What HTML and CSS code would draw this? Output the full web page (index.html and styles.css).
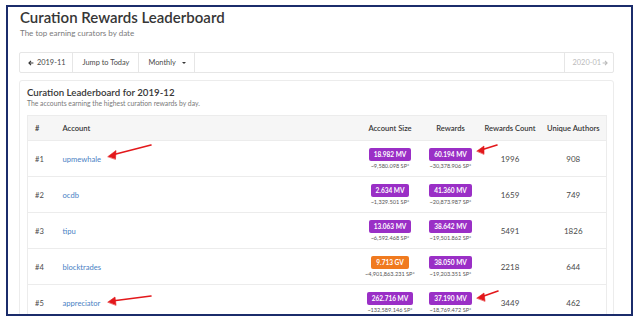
FILE: index.html
```html
<!DOCTYPE html>
<html lang="en">
<head>
    <meta charset="UTF-8">
    <meta name="viewport" content="width=device-width, initial-scale=1.0">
    <title>Curation Rewards Leaderboard</title>
    <link rel="stylesheet" href="styles.css">
</head>
<body>

    <div class="frame">
        <div class="page">
            <h1 class="title">Curation Rewards Leaderboard</h1>
            <p class="subtitle">The top earning curators by date</p>

            <!-- Date navigation -->
            <div class="nav-bar">
                <a class="nav-btn first">
                    <svg class="nav-icon" viewBox="0 0 10 10"><path d="M5 1.5 L1.5 5 L5 8.5 M1.5 5 H9" fill="none" stroke="#363636" stroke-width="1.8"/></svg>
                    2019-11
                </a>
                <a class="nav-btn">Jump to Today</a>
                <a class="nav-btn monthly">Monthly <span class="caret"></span></a>
                <span class="nav-spacer"></span>
                <a class="nav-btn disabled">2020-01<svg class="nav-icon" viewBox="0 0 10 10"><path d="M5 1.5 L8.5 5 L5 8.5 M8.5 5 H1" fill="none" stroke="#bbb" stroke-width="1.8"/></svg></a>
            </div>

            <!-- Leaderboard card -->
            <div class="card">
                <h2 class="card-title">Curation Leaderboard for 2019-12</h2>
                <p class="card-subtitle">The accounts earning the highest curation rewards by day.</p>

                <table class="board">
                    <colgroup>
                        <col style="width: 28px">
                        <col style="width: 303px">
                        <col style="width: 63px">
                        <col style="width: 58px">
                        <col style="width: 61px">
                        <col style="width: 66px">
                    </colgroup>
                    <thead>
                        <tr>
                            <th>#</th>
                            <th>Account</th>
                            <th class="num">Account Size</th>
                            <th class="num">Rewards</th>
                            <th class="num">Rewards Count</th>
                            <th class="num">Unique Authors</th>
                        </tr>
                    </thead>
                    <tbody>
                        <tr>
                            <td class="rank">#1</td>
                            <td><a class="account">upmewhale</a></td>
                            <td class="num"><span class="tag">18.982 MV</span><span class="sp">~9,580.098 SP*</span></td>
                            <td class="num"><span class="tag">60.194 MV</span><span class="sp">~30,378.906 SP*</span></td>
                            <td class="num">1996</td>
                            <td class="num">908</td>
                        </tr>
                        <tr>
                            <td class="rank">#2</td>
                            <td><a class="account">ocdb</a></td>
                            <td class="num"><span class="tag">2.634 MV</span><span class="sp">~1,329.501 SP*</span></td>
                            <td class="num"><span class="tag">41.360 MV</span><span class="sp">~20,873.987 SP*</span></td>
                            <td class="num">1659</td>
                            <td class="num">749</td>
                        </tr>
                        <tr>
                            <td class="rank">#3</td>
                            <td><a class="account">tipu</a></td>
                            <td class="num"><span class="tag">13.063 MV</span><span class="sp">~6,592.468 SP*</span></td>
                            <td class="num"><span class="tag">38.642 MV</span><span class="sp">~19,501.862 SP*</span></td>
                            <td class="num">5491</td>
                            <td class="num">1826</td>
                        </tr>
                        <tr>
                            <td class="rank">#4</td>
                            <td><a class="account">blocktrades</a></td>
                            <td class="num"><span class="tag gv">9.713 GV</span><span class="sp">~4,901,863.231 SP*</span></td>
                            <td class="num"><span class="tag">38.050 MV</span><span class="sp">~19,203.351 SP*</span></td>
                            <td class="num">2218</td>
                            <td class="num">644</td>
                        </tr>
                        <tr>
                            <td class="rank">#5</td>
                            <td><a class="account">appreciator</a></td>
                            <td class="num"><span class="tag">262.716 MV</span><span class="sp">~132,589.146 SP*</span></td>
                            <td class="num"><span class="tag">37.190 MV</span><span class="sp">~18,769.472 SP*</span></td>
                            <td class="num">3449</td>
                            <td class="num">462</td>
                        </tr>
                    </tbody>
                </table>
            </div>
        </div>

        <!-- Red annotation arrows drawn over the screenshot -->
        <svg class="marks" viewBox="0 0 627 311" width="627" height="311">
            <g stroke="#e3181b" stroke-width="1.6" fill="#e3181b" stroke-linecap="round">
                <line x1="143" y1="138" x2="104" y2="148"/>
                <path d="M100 149.5 L108 143.5 L107.5 152 Z" stroke-width="0.6"/>
                <line x1="489" y1="138" x2="473" y2="143"/>
                <path d="M469 144 L476 139 L476 147 Z" stroke-width="0.6"/>
                <line x1="143" y1="289" x2="104" y2="294"/>
                <path d="M100 295 L107 290 L108 298 Z" stroke-width="0.6"/>
                <line x1="490" y1="284" x2="473" y2="290"/>
                <path d="M469 291 L476 286 L477 294 Z" stroke-width="0.6"/>
            </g>
        </svg>
    </div>

</body>
</html>
```

FILE: styles.css
```css
/* General page styling */
body {
    margin: 0;
    background: #fff;
    font-family: Lato, "Open Sans", sans-serif;
    color: #4a4a4a;
}

/* Dark frame around the screenshot */
.frame {
    position: relative;
    box-sizing: border-box;
    width: 627px;
    height: 311px;
    margin: 5px 0 0 6px;
    border: 2px solid #1b2c6b;
    overflow: hidden;
    background: #fff;
}

.page {
    padding: 1px 17px 0 11px;
}

/* Headings */
.title {
    margin: 0;
    font-size: 15px;
    font-weight: 600;
    line-height: 18px;
    color: #363636;
    padding-left: 1px;
}

.subtitle {
    margin: 2px 0 0 1px;
    font-size: 8px;
    line-height: 10px;
    color: #7a7a7a;
}

/* Date navigation bar */
.nav-bar {
    display: flex;
    margin-top: 14px;
    height: 21px;
    box-sizing: border-box;
    border: 1px solid #e6e6e6;
    border-radius: 2px;
}

.nav-btn {
    display: flex;
    align-items: center;
    gap: 3px;
    padding: 0 9px;
    font-size: 7.4px;
    color: #4a4a4a;
    border-right: 1px solid #e6e6e6;
}

.nav-btn.first {
    padding: 0 7px 0 8px;
}

.nav-btn.monthly {
    padding: 0 8px 0 9px;
}

.nav-btn.disabled {
    color: #bbb;
    border-right: none;
    border-left: 1px solid #e6e6e6;
    padding: 0 5px 0 8px;
    gap: 1px;
}

.nav-spacer {
    flex: 1;
}

.nav-icon {
    width: 6px;
    height: 6px;
}

.caret {
    display: inline-block;
    margin-left: 3px;
    border-left: 2px solid transparent;
    border-right: 2px solid transparent;
    border-top: 2px solid #363636;
}

/* Leaderboard card */
.card {
    margin-top: 7px;
    border: 1px solid #ececec;
    border-radius: 3px;
    padding: 5px 7px 20px 7px;
}

.card-title {
    margin: 0;
    font-size: 9.7px;
    font-weight: 600;
    line-height: 13px;
    color: #363636;
}

.card-subtitle {
    margin: 0;
    font-size: 6.8px;
    line-height: 9px;
    color: #7a7a7a;
}

/* Table */
.board {
    margin-top: 7px;
    width: 579px;
    table-layout: fixed;
    border-collapse: collapse;
    border: 1px solid #ececec;
    font-size: 7.6px;
}

.board th {
    height: 24px;
    padding: 0 7px;
    text-align: left;
    font-weight: 600;
    color: #363636;
    background: #f6f6f6;
    border-bottom: 1px solid #ececec;
}

.board td {
    height: 35px;
    padding: 0 7px;
    border-bottom: 1px solid #ececec;
    vertical-align: middle;
    color: #4a4a4a;
}

.board .num {
    text-align: center;
    padding: 0;
}

.board td.num {
    font-size: 8px;
}

.rank {
    color: #5a5a5a;
}

.account {
    color: #4a7fc4;
}

/* Value badges */
.tag {
    display: inline-block;
    height: 13px;
    line-height: 13px;
    padding: 0 5px;
    border-radius: 2px;
    background: #9a2fc6;
    color: #fff;
    font-size: 6.5px;
    font-weight: 700;
    white-space: nowrap;
}

.tag.gv {
    background: #f07a1f;
}

.sp {
    display: block;
    margin-top: 1px;
    font-size: 5.6px;
    line-height: 7px;
    color: #555;
    white-space: nowrap;
}

/* Annotation overlay */
.marks {
    position: absolute;
    left: 0;
    top: 0;
    pointer-events: none;
}
```
